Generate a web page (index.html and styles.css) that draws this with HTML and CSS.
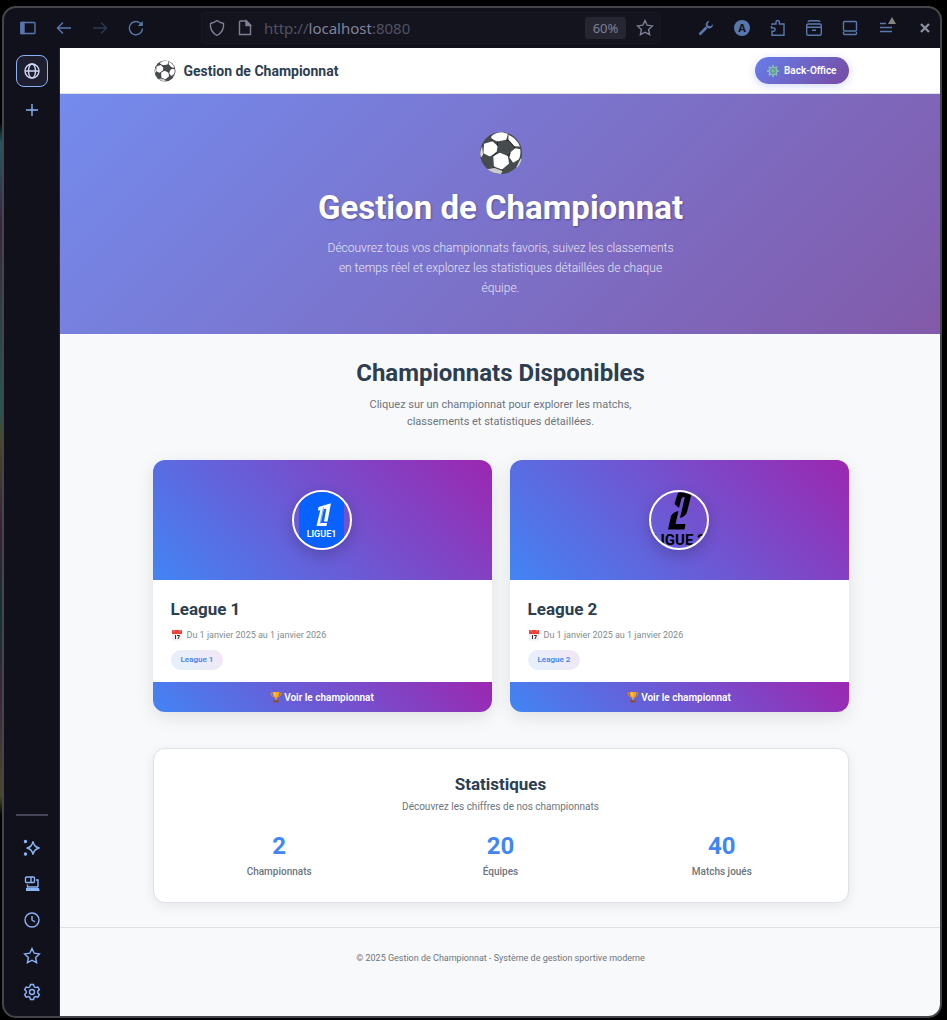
FILE: index.html
```html
<!DOCTYPE html>
<html lang="fr">
<head>
<meta charset="utf-8">
<meta name="viewport" content="width=device-width, initial-scale=1">
<title>Gestion de Championnat</title>
<link rel="stylesheet" href="styles.css">
</head>
<body>
<svg class="sprite" aria-hidden="true">
  <symbol id="ball" viewBox="538 34 130 130">
    <circle cx="603" cy="99" r="62" fill="#464b4e"/>
    <g fill="#fff">
      <path d="M574 50Q588 38 606 38L623 42 619 60 592 65 575 57Z"/>
      <path d="M625 45Q648 54 659 80L641 79 625 62Z"/>
      <path d="M553 72L578 64 593 78 590 97 570 109 551 100Z"/>
      <path d="M645 85L660 88Q662 108 655 118L639 128 628 112 632 96Z"/>
      <path d="M580 108L600 98 623 108 627 130 606 148 582 139Z"/>
      <path d="M547 80L550 104 544 112Q538 98 547 80Z" fill="#ddd"/>
      <path d="M563 147L583 143 608 152 603 161Q580 160 563 147Z" fill="#ccc"/>
      <path d="M650 138L661 115 663 120Q660 132 650 143Z" fill="#ddd"/>
    </g>
    <path d="M575 57L578 64M592 65L593 78M619 60L625 62 641 79 645 85M630 100L623 108M590 97L580 108M582 139L583 143M606 148L608 152" stroke="#222" stroke-width="3" fill="none"/>
  </symbol>
  <symbol id="calendar" viewBox="0 0 12 12">
    <rect x="1" y="1" width="10" height="10.500" rx="1" fill="#ededed"/>
    <path d="M1 1h10v4H1z" fill="#f0413a"/>
    <path d="M3 1v1.500M9 1v1.500" stroke="#e9a5a2"/>
    <path d="M4.500 6v4M6 6.500h2.500L7 10" stroke="#333" fill="none"/>
  </symbol>
  <symbol id="trophy" viewBox="0 0 12 12">
    <path d="M3 2H.8q0 3 3 4M9 2h2.200q0 3-3 4" fill="none" stroke="#d98c1b"/>
    <path d="M2.700 1h6.600q0 5-2.600 6v2H5.300V7Q2.700 6 2.700 1Z" fill="#f5a623"/>
    <path d="M4 1.500h1.500v4Q4.200 4 4 1.500Z" fill="#ffd76a"/>
    <path d="M3.500 9h5v2.500h-5z" fill="#875230"/>
  </symbol>
  <symbol id="star" viewBox="0 0 18 18">
    <path d="M9 1.500l2.200 4.700 5.200.700-3.800 3.600 1 5.200L9 13.200 4.400 15.700l1-5.200L1.600 6.900l5.200-.700Z"/>
  </symbol>
</svg>

<div class="window">
  <header class="toolbar">
    <nav class="tools" aria-label="Navigation">
      <button class="tool" aria-label="Panneau latéral"><svg viewBox="0 0 18 18"><rect x="2" y="3.500" width="14" height="11" rx="1"/><path d="M2 3.500h3v11H2z" fill="currentColor"/></svg></button>
      <button class="tool" aria-label="Précédent"><svg viewBox="0 0 18 18"><path d="M16 9H2.500M8 3.500L2.500 9 8 14.500"/></svg></button>
      <button class="tool tool-off" aria-label="Suivant" disabled><svg viewBox="0 0 18 18"><path d="M2 9h13.500M10 3.500L15.500 9 10 14.500"/></svg></button>
      <button class="tool" aria-label="Actualiser"><svg viewBox="0 0 18 18"><path d="M15.500 9.500A6.600 6.600 0 1 1 13 4l2 2"/><path d="M15.800 2v5h-5Z" fill="currentColor" stroke="none"/></svg></button>
    </nav>
    <div class="address">
      <svg class="mark" viewBox="0 0 18 18"><path d="M9 1.500Q12 3.700 15.500 4.500 16.500 12 9 16.500 1.500 12 2.500 4.500 6 3.700 9 1.500Z"/></svg>
      <svg class="mark" viewBox="0 0 18 18"><path d="M4.500 2h6l4 4v9.500h-11V3q0-1 1-1Z"/><path d="M10 2v4.500h4.500Z" fill="currentColor"/></svg>
      <div class="url" role="textbox" aria-label="Adresse">http://<span class="host">localhost</span>:8080</div>
      <button class="scale">60%</button>
      <button class="fav" aria-label="Marquer"><svg class="mark"><use href="#star"/></svg></button>
    </div>
    <nav class="tools" aria-label="Extensions">
      <button class="tool" aria-label="Outils"><svg viewBox="0 0 18 18"><path d="M2.500 15.500L9.500 8.500" stroke-width="2.600"/><path d="M12.500 1.800Q8 2.500 8.800 7 10 10.300 13.500 9.200 16 8 16.200 5.300L13.500 7.300 10.800 6.800 10.700 4.600Z" fill="currentColor" stroke="none"/></svg></button>
      <button class="tool" aria-label="Compte A"><span class="avatar">A</span></button>
      <button class="tool" aria-label="Extensions"><svg viewBox="0 0 18 18"><path d="M3 6V5h4V3.500q0-2 1.700-2t1.700 2V5H15v11.300H3v-4h1.500q1.700 0 1.700-1.700T4.500 9H2.500V7"/></svg></button>
      <button class="tool" aria-label="Archives"><svg viewBox="0 0 18 18"><path d="M3 3q.5-1.200 1.500-1.200h9q1 0 1.500 1.200"/><rect x="1.700" y="5" width="14.600" height="11.300" rx="1.500"/><path d="M1.700 8.300h14.600M7 11.200h4"/></svg></button>
      <button class="tool" aria-label="Affichage"><svg viewBox="0 0 18 18"><rect x="2.500" y="2.500" width="13" height="9.500" rx="1"/><path d="M2.500 13v1.500q0 1 1 1h11q1 0 1-1V13"/></svg></button>
      <button class="tool" aria-label="Menu"><svg viewBox="0 0 18 18"><path d="M3 4.500h6M3 8.500h12M3 12.500h12"/></svg><span class="notice"></span></button>
    </nav>
    <button class="close" aria-label="Fermer"><svg viewBox="0 0 18 18"><path d="M5 5l8 8M13 5l-8 8" stroke-width="2.400"/></svg></button>
  </header>

  <div class="workspace">
    <aside class="rail">
      <button class="tab" aria-label="Onglet"><svg viewBox="0 0 18 18"><circle cx="9" cy="9" r="7"/><ellipse cx="9" cy="9" rx="3.500" ry="7"/><path d="M2 9h14"/></svg></button>
      <button class="side plus" aria-label="Nouvel onglet"><svg viewBox="0 0 18 18"><path d="M9 3v12M3 9h12"/></svg></button>
      <div class="rail-end">
        <button class="side" aria-label="Assistant"><svg viewBox="0 0 18 18"><path d="M10 2.500Q11 8 16.500 9 11 10 10 15.500 9 10 3.700 9 9 8 10 2.500Z"/><circle cx="2.500" cy="2.500" r="1" fill="currentColor"/><circle cx="2.500" cy="15" r="1" fill="currentColor"/></svg></button>
        <button class="side" aria-label="Appareils"><svg viewBox="0 0 18 18"><rect x="2.500" y="2" width="9" height="5.500" rx="1"/><path d="M8 2v5.500M13 5h2v7M4.500 9.500V12H15"/><path d="M3 13h13l.7 3H3Z" fill="currentColor" stroke="none"/></svg></button>
        <button class="side" aria-label="Historique"><svg viewBox="0 0 18 18"><circle cx="9" cy="9" r="7"/><path d="M9 5v4l3 2"/></svg></button>
        <button class="side" aria-label="Favoris"><svg><use href="#star"/></svg></button>
        <button class="side" aria-label="Paramètres"><svg viewBox="0 0 18 18"><path d="M7.500 1.500h3l.7 2.300 1.300.8 2.400-.6 1.500 2.600L14.700 8.300v1.500l1.700 1.700-1.500 2.600-2.400-.6-1.300.8-.7 2.200h-3l-.7-2.200-1.300-.8-2.400.6-1.500-2.600 1.700-1.700V8.300L1.600 6.600 3.100 4l2.400.6 1.300-.8Z"/><circle cx="9" cy="9" r="2.500"/></svg></button>
      </div>
    </aside>

    <div class="page">
      <header class="site-header">
        <div class="container bar">
          <a class="brand" href="#"><svg><use href="#ball"/></svg>Gestion de Championnat</a>
          <a class="office" href="#"><svg viewBox="0 0 14 14"><g stroke="#82b5b9" stroke-width="2"><path d="M7 1v12M1 7h12M2.800 2.800l8.400 8.400M11.200 2.800l-8.400 8.400"/></g><circle cx="7" cy="7" r="4" fill="#669aa4" stroke="#91c5bd"/><circle cx="7" cy="7" r="1.500" fill="#75c791"/></svg>Back-Office</a>
        </div>
      </header>

      <section class="hero">
        <svg class="hero-ball"><use href="#ball"/></svg>
        <h1>Gestion de Championnat</h1>
        <p>Découvrez tous vos championnats favoris, suivez les classements en temps réel et explorez les statistiques détaillées de chaque équipe.</p>
      </section>

      <main class="container content">
        <div class="intro">
          <h2>Championnats Disponibles</h2>
          <p>Cliquez sur un championnat pour explorer les matchs, classements et statistiques détaillées.</p>
        </div>

        <div class="cards">
          <article class="card">
            <div class="cover">
              <svg class="crest" viewBox="2 2 56 56" role="img" aria-label="Ligue 1">
                <defs><clipPath id="c1"><circle cx="30" cy="30" r="28.500"/></clipPath></defs>
                <path d="M7 0h45v60H7z" fill="#0862ff" clip-path="url(#c1)"/>
                <path d="M26.500 17L39 13.300 35.500 31.500H32L34.300 18.500 31.800 19.300 28.800 33H35L34.500 36H24.500L28.300 20 26 20.700Z" fill="#fff"/>
                <path d="M31.500 17.500L28 34" stroke="#0862ff" stroke-width=".6"/>
                <text x="29.500" y="47" text-anchor="middle" class="crest-small">LIGUE1</text>
              </svg>
            </div>
            <div class="details">
              <h3>League 1</h3>
              <p class="dates"><svg><use href="#calendar"/></svg>Du 1 janvier 2025 au 1 janvier 2026</p>
              <span class="tag">League 1</span>
            </div>
            <a class="open" href="#"><svg><use href="#trophy"/></svg>Voir le championnat</a>
          </article>

          <article class="card">
            <div class="cover">
              <svg class="crest" viewBox="2 2 56 56" role="img" aria-label="Ligue 2">
                <defs><clipPath id="c2"><circle cx="30" cy="30" r="28"/></clipPath></defs>
                <g clip-path="url(#c2)">
                  <path d="M25.500 14L28.500 4Q29.500 2 32 2H39Q43 2 42 6L38 22Q37 26 31 28L35.500 8.500Q36 7 34.500 7T32.500 8.500L30 18Z"/>
                  <path d="M22 26Q24 22 29.500 21L26.500 34H36.500L35.500 39.500H19Z"/>
                  <text x="30" y="55" text-anchor="middle" class="crest-large">LIGUE 2</text>
                </g>
              </svg>
            </div>
            <div class="details">
              <h3>League 2</h3>
              <p class="dates"><svg><use href="#calendar"/></svg>Du 1 janvier 2025 au 1 janvier 2026</p>
              <span class="tag">League 2</span>
            </div>
            <a class="open" href="#"><svg><use href="#trophy"/></svg>Voir le championnat</a>
          </article>
        </div>

        <section class="stats">
          <h3>Statistiques</h3>
          <p>Découvrez les chiffres de nos championnats</p>
          <dl class="figures">
            <div class="figure"><dt>Championnats</dt><dd>2</dd></div>
            <div class="figure"><dt>Équipes</dt><dd>20</dd></div>
            <div class="figure"><dt>Matchs joués</dt><dd>40</dd></div>
          </dl>
        </section>
      </main>

      <footer class="site-footer">© 2025 Gestion de Championnat - Système de gestion sportive moderne</footer>
    </div>
  </div>
</div>
</body>
</html>
```

FILE: styles.css
```css
* { box-sizing: border-box; }

body {
  margin: 0;
  padding: 6px 5px 2px 2px;
  min-height: 100vh;
  display: flex;
  background: linear-gradient(#000 12%, #1d5c66 14%, #3c2440 22%, #1f5a55 40%, #4a4a25 43%, #3a1f3c 52%, #123238 60%, #3c2440 68%, #4a4a25 78%, #000 80%) 0 0 / 2px 100% no-repeat #000;
  font-family: Roboto, "Liberation Sans", sans-serif;
  color: #2c3e50;
}

h1, h2, h3, p, dl, dd { margin: 0; }
a { color: inherit; text-decoration: none; }
button {
  padding: 0;
  border: 0;
  background: none;
  color: inherit;
  font: inherit;
}
.sprite { position: absolute; width: 0; height: 0; }

.window {
  flex: 1;
  min-width: 0;
  display: flex;
  flex-direction: column;
  overflow: hidden;
  border: 2px solid #45454b;
  border-radius: 14px;
  background: #11111b;
}

/* Browser toolbar */
.toolbar {
  display: flex;
  align-items: center;
  height: 40px;
  padding-left: 6px;
  color: #5878ad;
}
.toolbar svg, .rail svg {
  width: 18px;
  height: 18px;
  fill: none;
  stroke: currentColor;
  stroke-width: 1.4;
}
.tools { display: flex; }
.tool {
  position: relative;
  width: 36px;
  height: 32px;
  display: grid;
  place-items: center;
}
.tool-off { color: #2b3853; }
.avatar {
  width: 16px;
  height: 16px;
  border-radius: 50%;
  background: #5878ad;
  color: #11111b;
  font: bold 11px/16px "Noto Sans", sans-serif;
}
.notice {
  position: absolute;
  top: 5px;
  right: 8px;
  border: 4px solid transparent;
  border-top: 0;
  border-bottom: 7px solid #858585;
}
.address {
  flex: 1;
  min-width: 0;
  height: 32px;
  margin: 0 27px 0 47px;
  padding: 0 6px;
  display: flex;
  align-items: center;
  gap: 10px;
  border: 1px solid #191926;
  border-radius: 4px;
  background: #14141f;
  color: #7d8094;
}
.url {
  flex: 1;
  font: 15px/20px "Noto Sans", sans-serif;
  color: #505263;
}
.host { color: #80839a; }
.scale {
  width: 41px;
  height: 22px;
  border-radius: 3px;
  background: #262633;
  font: 13px/22px "Noto Sans", sans-serif;
}
.fav { display: flex; }
.close {
  width: 30px;
  height: 32px;
  margin-left: 6px;
  display: grid;
  place-items: center;
  color: #8a8d9f;
}

/* Sidebar */
.workspace { flex: 1; display: flex; }
.rail {
  width: 56px;
  padding: 7px 11px 6px 12px;
  display: flex;
  flex-direction: column;
  border-right: 1px solid #23232e;
  color: #89b4fa;
}
.tab {
  width: 32px;
  height: 32px;
  display: grid;
  place-items: center;
  border: 1px solid #89b4fa;
  border-radius: 8px;
  background: #1e1e2e;
  color: #cdd6f4;
}
.side {
  width: 32px;
  height: 36px;
  display: grid;
  place-items: center;
}
.plus { margin-top: 5px; }
.rail-end {
  margin-top: auto;
  padding-top: 14px;
  border-top: 2px solid #45455a;
}

/* Page */
.page {
  flex: 1;
  min-width: 0;
  margin-right: -1px;
  background: #f8f9fb;
}
.container { max-width: 696px; margin: 0 auto; }
.site-header {
  border-bottom: 1px solid #dee1e6;
  background: #fff;
}
.bar {
  height: 45px;
  padding-left: 1px;
  display: flex;
  align-items: center;
  justify-content: space-between;
}
.brand {
  display: flex;
  align-items: center;
  gap: 8px;
  font-size: 14px;
  font-weight: 700;
}
.brand svg { width: 22px; height: 22px; }
.office {
  height: 27px;
  padding: 0 12px 0 11px;
  display: flex;
  align-items: center;
  gap: 4px;
  border-radius: 14px;
  background: linear-gradient(135deg, #667eea, #764ba2);
  box-shadow: 0 2px 9px rgba(102, 126, 234, .3);
  color: #fff;
  font-size: 10px;
  font-weight: 600;
}
.office svg { width: 14px; height: 14px; }

.hero {
  padding: 37px 20px 36px;
  display: flex;
  flex-direction: column;
  align-items: center;
  background: linear-gradient(135deg, #748bed, #825aa9);
  color: #fff;
  text-align: center;
}
.hero-ball { width: 44px; height: 44px; }
.hero h1 {
  margin: 13px 0 10px;
  font-size: 33px;
  line-height: 40px;
  text-shadow: 1px 1px 2px rgba(0, 0, 0, .3);
}
.hero p {
  max-width: 356px;
  font-size: 12px;
  line-height: 20px;
  font-weight: 300;
  opacity: .8;
}

.content { padding: 24px 0; }
.intro { text-align: center; }
.intro h2 { font-size: 24px; line-height: 30px; }
.intro p {
  max-width: 300px;
  margin: 8px auto 30px;
  color: #6c757d;
  font-size: 11px;
  line-height: 17px;
}

.cards {
  display: grid;
  grid-template-columns: 1fr 1fr;
  gap: 18px;
}
.card {
  overflow: hidden;
  border-radius: 12px;
  background: #fff;
  box-shadow: 0 5px 18px rgba(0, 0, 0, .1);
}
.cover {
  height: 120px;
  display: grid;
  place-items: center;
  background: linear-gradient(45deg, #4285f4, #9c27b0);
}
.crest {
  width: 60px;
  height: 60px;
  border: 2px solid #fff;
  border-radius: 50%;
  box-shadow: 0 5px 15px rgba(0, 0, 0, .2);
}
.crest-small {
  fill: #fff;
  font: 600 9px Roboto, sans-serif;
}
.crest-large {
  font: bold 15px Roboto, sans-serif;
}
.details { padding: 18px 18px 12px; }
.details h3, .stats h3 { font-size: 17px; line-height: 22px; }
.dates {
  margin: 8px 0;
  display: flex;
  align-items: center;
  gap: 4px;
  color: #7f8c8d;
  font-size: 9px;
  line-height: 14px;
}
.dates svg { width: 12px; height: 12px; }
.tag {
  display: block;
  width: max-content;
  padding: 0 10px;
  border-radius: 10px;
  background: linear-gradient(45deg, #e3f2fd, #f3e5f5);
  color: #4285f4;
  font-size: 8px;
  font-weight: 600;
  line-height: 20px;
}
.open {
  height: 30px;
  display: flex;
  align-items: center;
  justify-content: center;
  gap: 2px;
  background: linear-gradient(45deg, #4285f4, #9c27b0);
  color: #fff;
  font-size: 10px;
  font-weight: 600;
}
.open svg { width: 12px; height: 12px; }

.stats {
  margin-top: 36px;
  padding: 24px 24px 23px;
  border: 1px solid #dee1e6;
  border-radius: 12px;
  background: #fff;
  box-shadow: 0 3px 12px rgba(0, 0, 0, .08);
  text-align: center;
}
.stats p {
  margin: 5px 0 18px;
  color: #6c757d;
  font-size: 10px;
  line-height: 14px;
}
.figures {
  display: grid;
  grid-template-columns: repeat(3, 1fr);
  gap: 18px;
}
.figure { display: flex; flex-direction: column-reverse; gap: 5px; }
.figure dt {
  color: #6c757d;
  font-size: 10px;
  font-weight: 500;
  line-height: 14px;
}
.figure dd {
  color: #4285f4;
  font-size: 24px;
  font-weight: 700;
  line-height: 28px;
}
.site-footer {
  padding: 24px;
  border-top: 1px solid #dee1e6;
  color: #6c757d;
  font-size: 9px;
  line-height: 12px;
  text-align: center;
}
```
